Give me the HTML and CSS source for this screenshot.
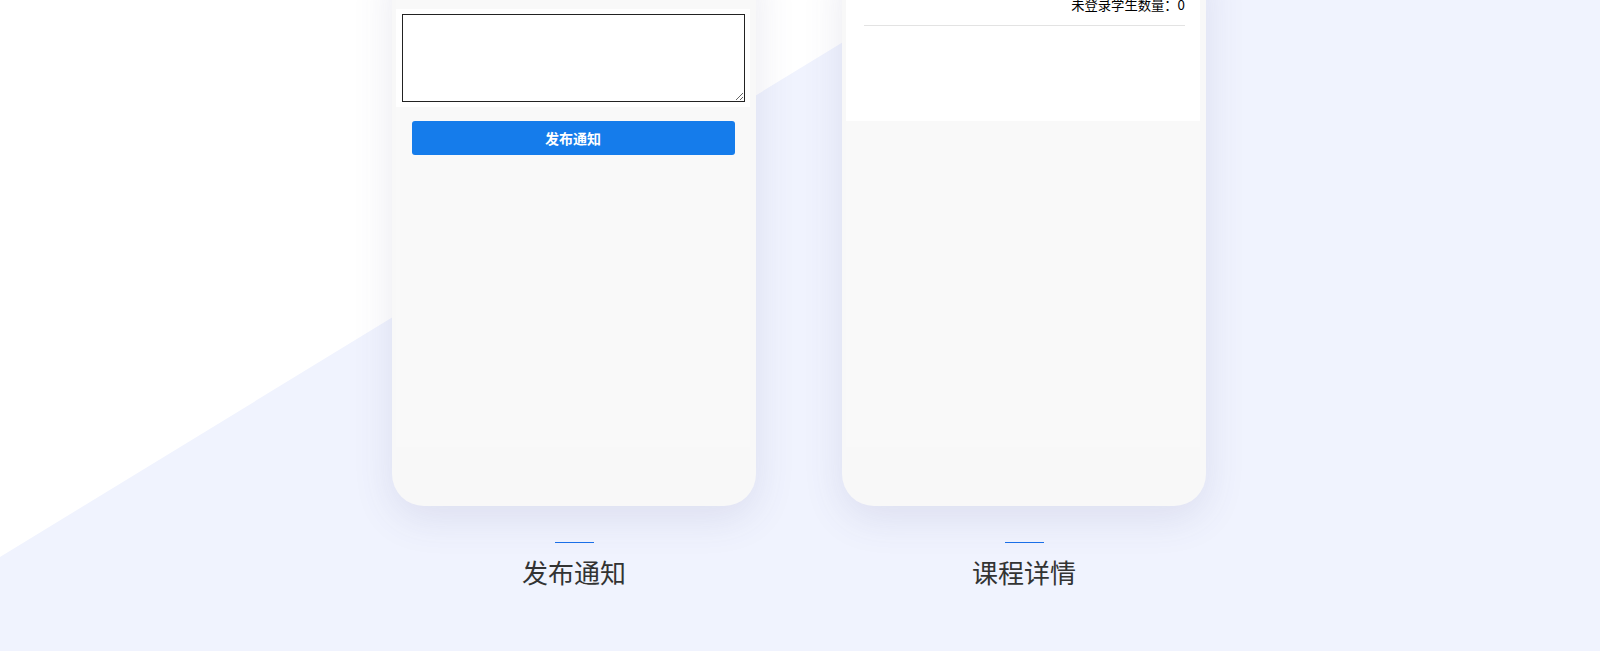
FILE: index.html
```html
<!DOCTYPE html>
<html lang="zh-CN">
<head>
    <meta charset="UTF-8">
    <meta name="viewport" content="width=device-width, initial-scale=1.0">
    <title>功能展示</title>
    <link rel="stylesheet" href="styles.css">
</head>
<body>
    <div class="showcase">
        <div class="phones">
            <div class="item">
                <div class="phone">
                    <div class="screen">
                        <div class="notice-form">
                            <textarea class="notice-input"></textarea>
                        </div>
                        <button class="publish-btn">发布通知</button>
                    </div>
                </div>
                <span class="caption-line"></span>
                <h3 class="caption">发布通知</h3>
            </div>
            <div class="item">
                <div class="phone">
                    <div class="screen">
                        <div class="course-panel">
                            <p class="stat">未登录学生数量：0</p>
                            <div class="divider"></div>
                        </div>
                    </div>
                </div>
                <span class="caption-line"></span>
                <h3 class="caption">课程详情</h3>
            </div>
        </div>
    </div>
</body>
</html>
```

FILE: styles.css
```css
*
{
    box-sizing: border-box;
    margin: 0;
    padding: 0;
}
body
{
    background: #fff;
    font-family: "Noto Sans CJK SC", "Noto Sans", sans-serif;
}
.showcase
{
    position: relative;
    height: 651px;
    overflow: hidden;
    background: #fff;
}
/* lavender diagonal band behind the phones */
.showcase::before
{
    content: "";
    position: absolute;
    inset: 0;
    background: #f0f3fe;
    clip-path: polygon(912px 0, 100% 0, 100% 100%, 0 100%, 0 557px);
}
.phones
{
    position: relative;
    display: flex;
    justify-content: center;
    gap: 86px;
    padding-right: 2px;
}
.item
{
    display: flex;
    flex-direction: column;
    align-items: center;
    width: 364px;
}
.phone
{
    width: 364px;
    height: 546px;
    margin-top: -40px;
    background: #f8f8f8;
    border-radius: 0 0 32px 32px;
    box-shadow: 0 12px 40px rgba(70, 78, 130, 0.12);
    padding: 0 6px 0 4px;
    overflow: hidden;
}
.screen
{
    height: 487px;
    background: #f9f9f9;
    display: flex;
    flex-direction: column;
    align-items: center;
}
.notice-form
{
    width: 100%;
    margin-top: 49px;
    background: #fff;
    padding: 5px 5px 5px 6px;
}
.notice-input
{
    display: block;
    width: 100%;
    height: 88px;
    border: 1px solid #222;
    resize: vertical;
}
.publish-btn
{
    margin-top: 14px;
    width: 323px;
    height: 34px;
    border: none;
    border-radius: 3px;
    background: #157ceb;
    color: #fff;
    font-family: inherit;
    font-size: 14px;
    font-weight: 600;
}
.course-panel
{
    width: 100%;
    height: 161px;
    background: #fff;
    padding: 35px 15px 0 18px;
}
.stat
{
    text-align: right;
    font-size: 13.3px;
    line-height: 20px;
    color: #000;
}
.divider
{
    height: 1px;
    margin-top: 10px;
    background: #e3e3e3;
}
.caption-line
{
    display: block;
    width: 39px;
    height: 1px;
    margin-top: 36px;
    background: #1a6fe8;
}
.caption
{
    margin-top: 11px;
    font-size: 26px;
    font-weight: 400;
    line-height: 36px;
    color: #333;
}
```
